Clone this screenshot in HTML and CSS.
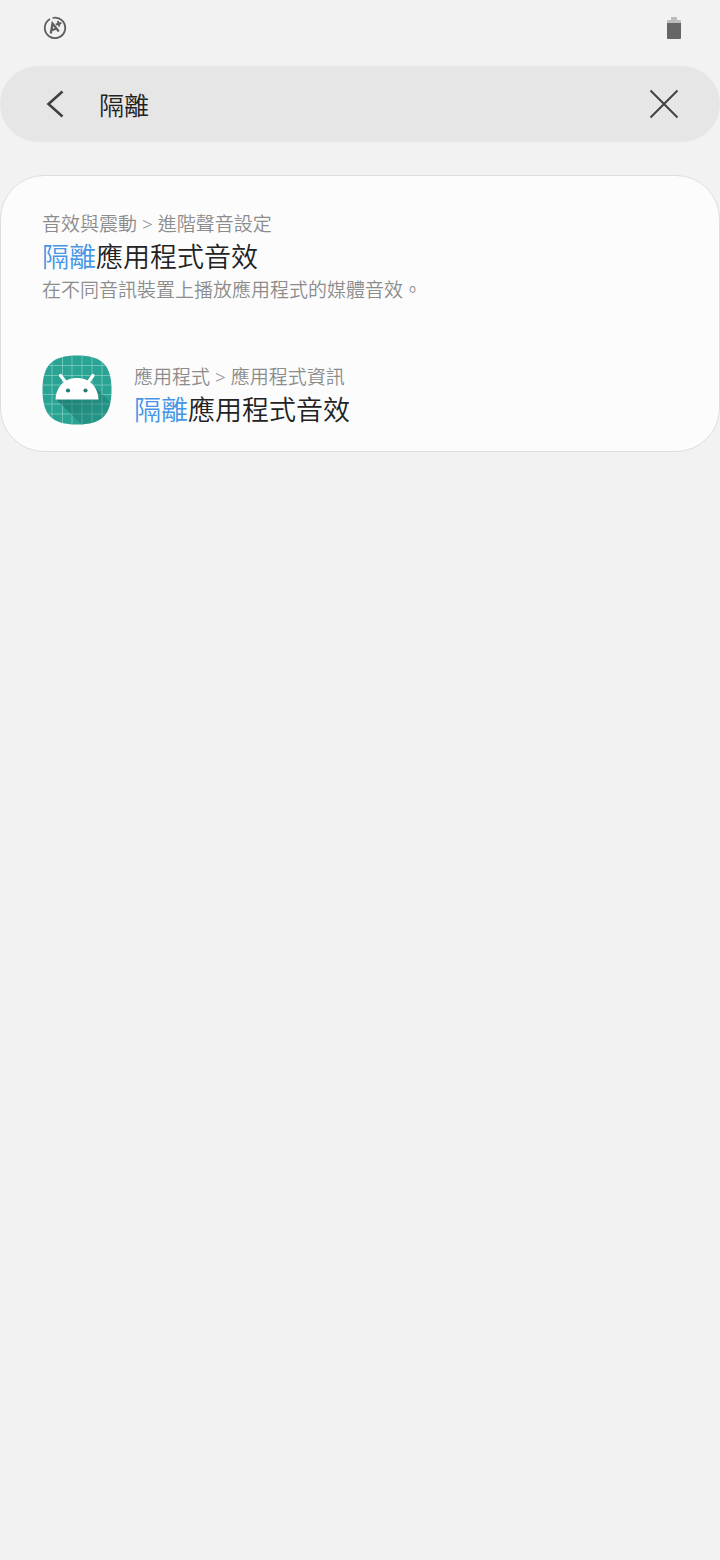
FILE: index.html
```html
<!DOCTYPE html>
<html lang="zh-Hant">
<head>
    <meta charset="UTF-8">
    <meta name="viewport" content="width=device-width, initial-scale=1.0">
    <title>搜尋設定</title>
    <link rel="stylesheet" href="styles.css">
</head>
<body>
    <div class="status-bar">
        <svg class="status-icon" viewBox="0 0 24 24" aria-hidden="true">
            <g fill="none" stroke="#5e5e5e">
                <path stroke-width="1.8" d="M9.500 2A10.200 10.200 0 1 1 7 3"/>
                <path stroke-width="2.200" d="M7.800 17.500L9.500 7.500L15.800 15.500M8 14.500L13.800 12.500"/>
                <path stroke-width="2" d="M14.800 5L16.400 10.600M12.800 8.500L18.400 7"/>
            </g>
        </svg>
        <svg class="battery-icon" viewBox="0 0 16 24" aria-hidden="true">
            <path fill="#bcbcbc" d="M5 1H11V4H14Q15 4 15 5V8H1V5Q1 4 2 4H5Z"/>
            <path fill="#666" d="M1 7H15V22Q15 23 14 23H2Q1 23 1 22Z"/>
        </svg>
    </div>

    <form class="search-bar" role="search">
        <button type="button" class="icon-btn" aria-label="返回">
            <svg viewBox="0 0 32 32"><path d="M22.5 3.5L8.5 16L22.5 28.5" stroke-width="2.6"/></svg>
        </button>
        <input type="text" class="search-input" value="隔離" aria-label="搜尋">
        <button type="reset" class="icon-btn" aria-label="清除">
            <svg viewBox="0 0 32 32"><path d="M2.5 2.5L29.5 29.5M29.5 2.5L2.5 29.5" stroke-width="2"/></svg>
        </button>
    </form>

    <main class="results">
        <a href="#" class="result">
            <div class="result-text">
                <p class="result-path">音效與震動 &gt; 進階聲音設定</p>
                <h2 class="result-title"><mark>隔離</mark>應用程式音效</h2>
                <p class="result-path">在不同音訊裝置上播放應用程式的媒體音效。</p>
            </div>
        </a>
        <a href="#" class="result">
            <svg class="app-icon" viewBox="0 0 70 70" aria-hidden="true">
                <defs>
                    <clipPath id="shape">
                        <path d="M35 .5C60 .5 69.500 10 69.500 35S60 69.500 35 69.500S.5 60 .5 35S10 .5 35 .5Z"/>
                    </clipPath>
                    <linearGradient id="shadow" x1="0" y1="0" x2="1" y2="1">
                        <stop offset="0" stop-color="#16695f" stop-opacity=".7"/>
                        <stop offset="1" stop-color="#16695f" stop-opacity="0"/>
                    </linearGradient>
                </defs>
                <g clip-path="url(#shape)">
                    <path fill="#29a394" d="M0 0H70V70H0Z"/>
                    <path fill="none" stroke="#7fcbc1" stroke-width=".8" d="M10 0V70M20.500 0V70M30 0V70M40 0V70M50 0V70M60 0V70M0 10.500H70M0 20.500H70M0 30H70M0 39.500H70M0 49H70M0 59H70"/>
                    <path fill="url(#shadow)" d="M14 44H56L54 33L80 59V80H50Z"/>
                </g>
                <path fill="none" stroke="#fff" stroke-width="3.200" stroke-linecap="round" d="M18.500 20.500L24 27.500M51 20.500L46 27.500"/>
                <path fill="#fff" d="M13.500 44.500C14 31.500 23 23 35 23S56 31.500 56.500 44.500Z"/>
                <circle cx="26" cy="35.500" r="2.100" fill="#247f75"/>
                <circle cx="43.500" cy="35.500" r="2.100" fill="#247f75"/>
            </svg>
            <div class="result-text">
                <p class="result-path">應用程式 &gt; 應用程式資訊</p>
                <h2 class="result-title"><mark>隔離</mark>應用程式音效</h2>
            </div>
        </a>
    </main>
</body>
</html>
```

FILE: styles.css
```css
* {
    margin: 0;
    padding: 0;
    box-sizing: border-box;
}

body {
    font-family: 'Noto Sans', 'Noto Sans CJK TC', sans-serif;
    font-weight: 350;
    background: #f2f2f2;
    color: #222;
    min-height: 100vh;
}

.status-bar {
    display: flex;
    justify-content: space-between;
    align-items: center;
    height: 66px;
    padding: 0 38px 10px 43px;
}

.status-icon {
    width: 24px;
    height: 24px;
}

.battery-icon {
    width: 16px;
    height: 24px;
}

.search-bar {
    display: flex;
    align-items: center;
    height: 76px;
    padding: 0 40px;
    border-radius: 38px;
    background: #e6e6e6;
}

.icon-btn {
    width: 32px;
    height: 32px;
    border: none;
    background: none;
    cursor: pointer;
}

.icon-btn svg {
    display: block;
    width: 32px;
    height: 32px;
    fill: none;
    stroke: #414143;
}

.search-input {
    flex: 1;
    min-width: 0;
    margin-left: 27px;
    border: none;
    outline: none;
    background: none;
    color: #222;
    font-family: inherit;
    font-size: 25px;
    font-weight: inherit;
}

.results {
    display: flex;
    flex-direction: column;
    gap: 51px;
    margin-top: 33px;
    padding: 26px 41px 22px;
    border: 1px solid #dedede;
    border-radius: 44px;
    background: #fcfcfc;
}

.result {
    display: flex;
    gap: 22px;
    color: inherit;
    text-decoration: none;
}

.app-icon {
    flex: none;
    width: 70px;
    height: 70px;
}

.result-text {
    padding-top: 8px;
}

.result-path {
    font-size: 19px;
    line-height: 28px;
    color: #8c8c8c;
}

.result-title {
    font-size: 27px;
    font-weight: inherit;
    line-height: 38px;
}

.result-title mark {
    background: none;
    color: #4696e6;
}
```
